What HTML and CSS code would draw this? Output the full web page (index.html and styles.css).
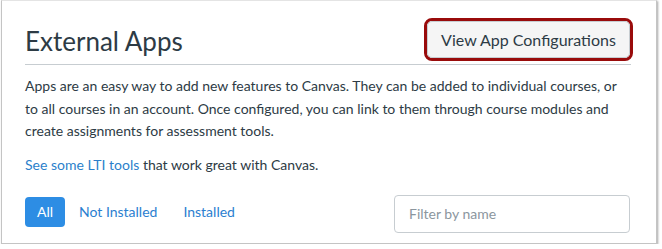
FILE: index.html
```html
<!DOCTYPE html>
<html>
<head>
<meta charset="utf-8">
<link rel="stylesheet" href="styles.css">
</head>
<body>
<div class="frame">
  <div class="header">
    <h1 class="title">External Apps</h1>
    <div class="highlight"><button class="btn">View App Configurations</button></div>
  </div>
  <p class="desc">Apps are an easy way to add new features to Canvas. They can be added to individual courses, or to all courses in an account. Once configured, you can link to them through course modules and create assignments for assessment tools.</p>
  <p class="lti"><a class="link" href="#">See some LTI tools</a> that work great with Canvas.</p>
  <div class="toolbar">
    <div class="tabs">
      <span class="tab active">All</span>
      <span class="tab">Not Installed</span>
      <span class="tab">Installed</span>
    </div>
    <input class="filter" type="text" placeholder="Filter by name">
  </div>
</div>
</body>
</html>
```
FILE: styles.css
```css
html, body {
  margin: 0;
  padding: 0;
  background: #ffffff;
}
body {
  font-family: Lato, "Open Sans", sans-serif;
  color: #2d3b45;
}
.frame {
  box-sizing: border-box;
  margin-left: 1px;
  width: 656px;
  height: 244px;
  border: 1px solid #c4c4c4;
  border-top-color: #e4e4e4;
  box-shadow: 1px 1px 2px rgba(0, 0, 0, 0.35);
  padding: 0 25px 0 23px;
}
.header {
  display: flex;
  justify-content: space-between;
  align-items: center;
  padding-top: 17px;
  padding-bottom: 3px;
  border-bottom: 1px solid #c7cdd1;
}
.title {
  margin: 0;
  font-size: 26px;
  font-weight: 400;
  line-height: 34px;
  margin-top: 2px;
}
.highlight {
  border: 3px solid #990b0b;
  border-radius: 8px;
  margin-right: -2px;
}
.btn {
  display: block;
  box-sizing: border-box;
  width: 203px;
  height: 37px;
  border: 1px solid #c7cdd1;
  border-radius: 5px;
  background: #f5f5f5;
  color: #2d3b45;
  font-family: Lato, sans-serif;
  font-size: 16px;
  padding: 0;
}
.desc {
  margin: 10px 0 0;
  font-size: 14px;
  line-height: 22.5px;
}
.lti {
  margin: 11px 0 0;
  font-size: 14px;
  line-height: 22px;
}
.link {
  color: #2b7fcb;
  text-decoration: none;
}
.toolbar {
  display: flex;
  justify-content: space-between;
  align-items: flex-start;
  margin-top: 19px;
}
.tabs {
  display: flex;
  align-items: center;
  margin-top: 2px;
}
.tab {
  font-size: 14px;
  color: #2b80d0;
  padding: 0 13px;
  line-height: 30px;
  height: 30px;
  border-radius: 4px;
}
.tab.active {
  background: #2d8de4;
  color: #ffffff;
  width: 40px;
  box-sizing: border-box;
  text-align: center;
  padding: 0;
  margin-right: 1px;
}
.filter {
  box-sizing: border-box;
  width: 236px;
  height: 38px;
  border: 1px solid #c7cdd1;
  border-radius: 4px;
  padding: 0 14px;
  font-family: Lato, sans-serif;
  font-size: 14px;
  color: #2d3b45;
  margin-right: 1px;
}
.filter::placeholder {
  color: #8b969e;
}
```
